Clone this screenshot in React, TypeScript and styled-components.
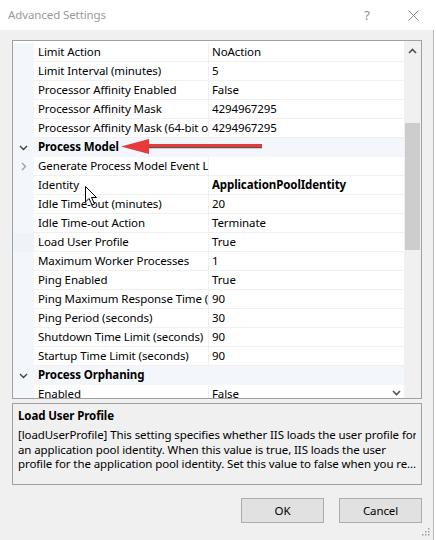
import React from 'react'
import styled, { createGlobalStyle, css } from 'styled-components'

const GlobalStyle = createGlobalStyle`
  html, body {
    margin: 0;
    padding: 0;
    background: #ffffff;
  }
  body {
    font-family: "Noto Sans", "Open Sans", sans-serif;
    font-size: 11.5px;
    letter-spacing: -0.1px;
    color: #000;
  }
`

type TRow =
  | { kind: 'category', name: string }
  | { kind: 'prop', name: string, value: string, bold?: boolean, expander?: boolean, selected?: boolean }

const rows: TRow[] = [
  { kind: 'prop', name: 'Limit Action', value: 'NoAction' },
  { kind: 'prop', name: 'Limit Interval (minutes)', value: '5' },
  { kind: 'prop', name: 'Processor Affinity Enabled', value: 'False' },
  { kind: 'prop', name: 'Processor Affinity Mask', value: '4294967295' },
  { kind: 'prop', name: 'Processor Affinity Mask (64-bit option)', value: '4294967295' },
  { kind: 'category', name: 'Process Model' },
  { kind: 'prop', name: 'Generate Process Model Event Log Entry', value: '', expander: true },
  { kind: 'prop', name: 'Identity', value: 'ApplicationPoolIdentity', bold: true },
  { kind: 'prop', name: 'Idle Time-out (minutes)', value: '20' },
  { kind: 'prop', name: 'Idle Time-out Action', value: 'Terminate' },
  { kind: 'prop', name: 'Load User Profile', value: 'True', selected: true },
  { kind: 'prop', name: 'Maximum Worker Processes', value: '1' },
  { kind: 'prop', name: 'Ping Enabled', value: 'True' },
  { kind: 'prop', name: 'Ping Maximum Response Time (seconds)', value: '90' },
  { kind: 'prop', name: 'Ping Period (seconds)', value: '30' },
  { kind: 'prop', name: 'Shutdown Time Limit (seconds)', value: '90' },
  { kind: 'prop', name: 'Startup Time Limit (seconds)', value: '90' },
  { kind: 'category', name: 'Process Orphaning' },
  { kind: 'prop', name: 'Enabled', value: 'False' },
]

const Window = styled.div`
  width: 436px;
  height: 540px;
  display: flex;
  flex-direction: column;
  background: #ffffff;
  position: relative;
  overflow: hidden;
`

const TitleBar = styled.div`
  height: 30px;
  display: flex;
  align-items: center;
  padding-left: 8px;
  background: #ffffff;
  color: #9a9a9a;
`

const TitleText = styled.span`
  flex: 1;
  margin-top: -2px;
`

const TitleButton = styled.span<{ $w: number }>`
  width: ${({ $w }) => $w}px;
  display: flex;
  justify-content: center;
  color: #8a8a8a;
  font-size: 13px;
`

const Body = styled.div`
  flex: 1;
  width: 421px;
  background: #f0f0f0;
  border-right: 1px solid #b8b8b8;
  padding: 10px 0 0 12px;
  display: flex;
  flex-direction: column;
  position: relative;
`

const Grid = styled.div`
  width: 408px;
  height: 357px;
  border: 1px solid #a0a0a0;
  background: #ffffff;
  display: flex;
  overflow: hidden;
`

const RowsArea = styled.div`
  flex: 1;
  padding-top: 2px;
  display: flex;
  flex-direction: column;
  overflow: hidden;
`

const Row = styled.div<{ $category?: boolean }>`
  height: 19px;
  flex: none;
  display: grid;
  grid-template-columns: 21px 175px 1fr;
  background: ${({ $category }) => ($category ? '#f3f6fa' : '#ffffff')};
`

const Gutter = styled.div<{ $selected?: boolean }>`
  display: flex;
  align-items: center;
  justify-content: center;
  background: ${({ $selected }) => ($selected ? '#eef3fa' : '#f3f6fa')};
`

const cellBase = css`
  line-height: 18px;
  white-space: nowrap;
  overflow: hidden;
  border-bottom: 1px solid #f0f0f0;
`

const NameCell = styled.div`
  ${cellBase}
  padding-left: 4px;
  border-right: 1px solid #f0f0f0;
`

const ValueCell = styled.div<{ $bold?: boolean }>`
  ${cellBase}
  padding-left: 3px;
  font-weight: ${({ $bold }) => ($bold ? 700 : 400)};
`

const CategoryLabel = styled.div`
  grid-column: 2 / span 2;
  line-height: 18px;
  padding-left: 4px;
  font-weight: 700;
  white-space: nowrap;
`

const ScrollBar = styled.div`
  width: 17px;
  background: #f0f0f0;
  display: flex;
  flex-direction: column;
  align-items: center;
`

const ScrollArrow = styled.div`
  height: 19px;
  width: 17px;
  display: flex;
  align-items: center;
  justify-content: center;
`

const ScrollTrack = styled.div`
  flex: 1;
  width: 100%;
  padding-top: 63px;
`

const ScrollThumb = styled.div`
  width: 15px;
  margin-left: 1px;
  height: 127px;
  background: #cdcdcd;
`

const Description = styled.div`
  margin-top: 4px;
  width: 398px;
  height: 74px;
  border: 1px solid #a0a0a0;
  padding: 3px 5px;
  display: flex;
  flex-direction: column;
`

const DescTitle = styled.div`
  font-weight: 700;
  line-height: 18px;
  margin-bottom: 3px;
`

const DescLine = styled.div`
  line-height: 14.5px;
  white-space: nowrap;
  overflow: hidden;
`

const Buttons = styled.div`
  margin-top: 13px;
  width: 410px;
  display: flex;
  justify-content: flex-end;
  gap: 15px;
`

const Button = styled.button`
  width: 83px;
  height: 25px;
  background: #e1e1e1;
  border: 1px solid #adadad;
  font-family: "Noto Sans", "Open Sans", sans-serif;
  font-size: 11.5px;
  letter-spacing: -0.1px;
  color: #000;
  padding: 0;
`

const Grip = styled.svg`
  position: absolute;
  right: 3px;
  bottom: 4px;
`

const Annotation = styled.svg`
  position: absolute;
  left: 0;
  top: 0;
  pointer-events: none;
`

const ChevronDown = ({ color }: { color: string }) => (
  <svg width="9" height="6" viewBox="0 0 9 6">
    <path d="M1 1 L4.5 4.5 L8 1" fill="none" stroke={ color } strokeWidth="1.4" />
  </svg>
)

const ChevronRight = ({ color }: { color: string }) => (
  <svg width="6" height="9" viewBox="0 0 6 9">
    <path d="M1 1 L4.5 4.5 L1 8" fill="none" stroke={ color } strokeWidth="1.4" />
  </svg>
)

const ChevronUp = ({ color }: { color: string }) => (
  <svg width="9" height="6" viewBox="0 0 9 6">
    <path d="M1 5 L4.5 1.5 L8 5" fill="none" stroke={ color } strokeWidth="1.6" />
  </svg>
)

const PropertyRow = ({ row }: { row: TRow }) => {
  if (row.kind === 'category') {
    return (
      <Row $category>
        <Gutter><ChevronDown color="#404040" /></Gutter>
        <CategoryLabel>{ row.name }</CategoryLabel>
      </Row>
    )
  }
  return (
    <Row>
      <Gutter $selected={ row.selected }>
        { row.expander && <ChevronRight color="#a0a0a0" /> }
      </Gutter>
      <NameCell>{ row.name }</NameCell>
      <ValueCell $bold={ row.bold }>{ row.value }</ValueCell>
    </Row>
  )
}

export default function App() {
  return (
    <>
      <GlobalStyle />
      <Window>
        <TitleBar>
          <TitleText>Advanced Settings</TitleText>
          <TitleButton $w={ 46 }>?</TitleButton>
          <TitleButton $w={ 46 }>
            <svg width="11" height="11" viewBox="0 0 11 11">
              <path d="M0.5 0.5 L10.5 10.5 M10.5 0.5 L0.5 10.5" stroke="#8a8a8a" strokeWidth="1" />
            </svg>
          </TitleButton>
        </TitleBar>
        <Body>
          <Grid>
            <RowsArea>
              { rows.map((row, i) => <PropertyRow key={ i } row={ row } />) }
            </RowsArea>
            <ScrollBar>
              <ScrollArrow><ChevronUp color="#505050" /></ScrollArrow>
              <ScrollTrack><ScrollThumb /></ScrollTrack>
            </ScrollBar>
          </Grid>
          <Description>
            <DescTitle>Load User Profile</DescTitle>
            <DescLine>[loadUserProfile] This setting specifies whether IIS loads the user profile for</DescLine>
            <DescLine>an application pool identity. When this value is true, IIS loads the user</DescLine>
            <DescLine>profile for the application pool identity. Set this value to false when you re...</DescLine>
          </Description>
          <Buttons>
            <Button>OK</Button>
            <Button>Cancel</Button>
          </Buttons>
          <Grip width="9" height="9" viewBox="0 0 9 9">
            { [[7, 1], [7, 4], [4, 4], [7, 7], [4, 7], [1, 7]].map(([x, y], i) => (
              <rect key={ i } x={ x } y={ y } width="1.5" height="1.5" fill="#a0a0a0" />
            )) }
          </Grip>
        </Body>
        <Annotation width="436" height="540" viewBox="0 0 436 540">
          <path d="M146 147.5 L262 147.5" stroke="#555" strokeWidth="1.5" />
          <path d="M146 145.5 L262 145.5" stroke="#e8393b" strokeWidth="3" />
          <path d="M121 146.5 L149 139 L149 154 Z" fill="#e8393b" />
          <path d="M393 391 L396.5 394.5 L400 391" fill="none" stroke="#505050" strokeWidth="1.6" />
          <path d="M85.5 186.5 L85.5 202 L89 198.5 L92 205 L94.5 204 L91.5 197.5 L96.5 197.5 Z" fill="#ffffff" stroke="#000000" strokeWidth="1" />
        </Annotation>
      </Window>
    </>
  )
}
